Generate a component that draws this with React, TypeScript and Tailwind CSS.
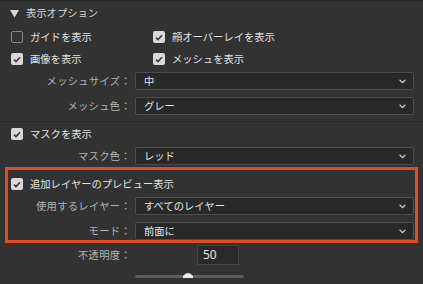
import React from "react";

const FONT = "font-['Noto_Sans_CJK_JP','Noto_Sans',sans-serif]";

function Checkbox({ checked }: { checked: boolean }) {
  if (!checked) {
    return <div className="w-[12px] h-[12px] rounded-[2px] border border-[#8a8a8a] shrink-0" />;
  }
  return (
    <div className="w-[12px] h-[12px] rounded-[2px] bg-[#d9d9d9] shrink-0 flex items-center justify-center">
      <svg width="8" height="7" viewBox="0 0 8 7">
        <path d="M1 3.6 L3 5.6 L7 1.2" fill="none" stroke="#3a3a3a" strokeWidth="1.6" />
      </svg>
    </div>
  );
}

function CheckItem({ checked, label }: { checked: boolean; label: string }) {
  return (
    <div className="flex items-center">
      <div className="ml-[11px]">
        <Checkbox checked={checked} />
      </div>
      <span className="ml-[7px] text-[#e2e2e2]">{label}</span>
    </div>
  );
}

function SelectRow({ label, value, className = "" }: { label: string; value: string; className?: string }) {
  return (
    <div className={`flex items-center ${className}`}>
      <div className="w-[131px] text-right text-[#b4b4b4] shrink-0 tracking-[0.3px]">{label}</div>
      <div className="ml-[4px] w-[279px] h-[18px] bg-[#282828] border border-[#4c4c4c] rounded-[2px] flex items-center justify-between pl-[8px] pr-[7px]">
        <span className="text-[#e4e4e4]">{value}</span>
        <svg width="7" height="5" viewBox="0 0 7 5">
          <path d="M0.6 0.8 L3.5 3.6 L6.4 0.8" fill="none" stroke="#d0d0d0" strokeWidth="1.2" />
        </svg>
      </div>
    </div>
  );
}

export default function App() {
  return (
    <div className={`w-[423px] h-[284px] bg-[#323232] border-t border-[#262626] overflow-hidden text-[10.3px] leading-none ${FONT}`}>
      <div className="h-[25px] flex items-center">
        <svg className="ml-[10px]" width="9" height="8" viewBox="0 0 9 8">
          <polygon points="0,0 9,0 4.5,7.5" fill="#d8d8d8" />
        </svg>
        <span className="ml-[7px] text-[#d8d8d8]">表示オプション</span>
      </div>

      <div className="grid grid-cols-[142px_1fr]">
        <div className="h-[22px] flex items-center"><CheckItem checked={false} label="ガイドを表示" /></div>
        <div className="h-[22px] flex items-center"><CheckItem checked={true} label="顔オーバーレイを表示" /></div>
        <div className="h-[22px] flex items-center"><CheckItem checked={true} label="画像を表示" /></div>
        <div className="h-[22px] flex items-center"><CheckItem checked={true} label="メッシュを表示" /></div>
      </div>

      <SelectRow className="mt-[2px]" label="メッシュサイズ：" value="中" />
      <SelectRow className="mt-[7px]" label="メッシュ色：" value="グレー" />

      <div className="mt-[6px] h-px bg-[#282828]" />

      <div className="h-[24px] flex items-center"><CheckItem checked={true} label="マスクを表示" /></div>
      <SelectRow className="mt-[1px]" label="マスク色：" value="レッド" />

      <div className="mt-[2px] mx-[5px] border-[3px] border-[#e64a23] pt-[2px]">
        <div className="h-[24px] flex items-center -ml-[8px]"><CheckItem checked={true} label="追加レイヤーのプレビュー表示" /></div>
        <div className="-ml-[8px]">
          <SelectRow className="mt-[1px]" label="使用するレイヤー：" value="すべてのレイヤー" />
          <SelectRow className="mt-[7px]" label="モード：" value="前面に" />
        </div>
      </div>

      <div className="mt-[2px] flex items-center h-[20px]">
        <div className="w-[131px] text-right text-[#b4b4b4] tracking-[0.3px]">不透明度：</div>
        <div className="ml-[66px] w-[42px] h-[20px] bg-[#2a2a2a] border border-[#454545] flex items-center pl-[5px] text-[12px] text-[#e4e4e4] font-['Noto_Sans',sans-serif]">
          50
        </div>
      </div>

      <div className="mt-[7px] ml-[135px] w-[109px] h-[8px] flex items-center">
        <div className="relative w-full h-[3px] bg-[#5c5c5c] rounded-full">
          <svg className="absolute left-[48px] -top-[4px]" width="10" height="7" viewBox="0 0 10 7">
            <path d="M0 7 L0 5 Q5 -1 10 5 L10 7 Z" fill="#ececec" />
          </svg>
        </div>
      </div>
    </div>
  );
}
